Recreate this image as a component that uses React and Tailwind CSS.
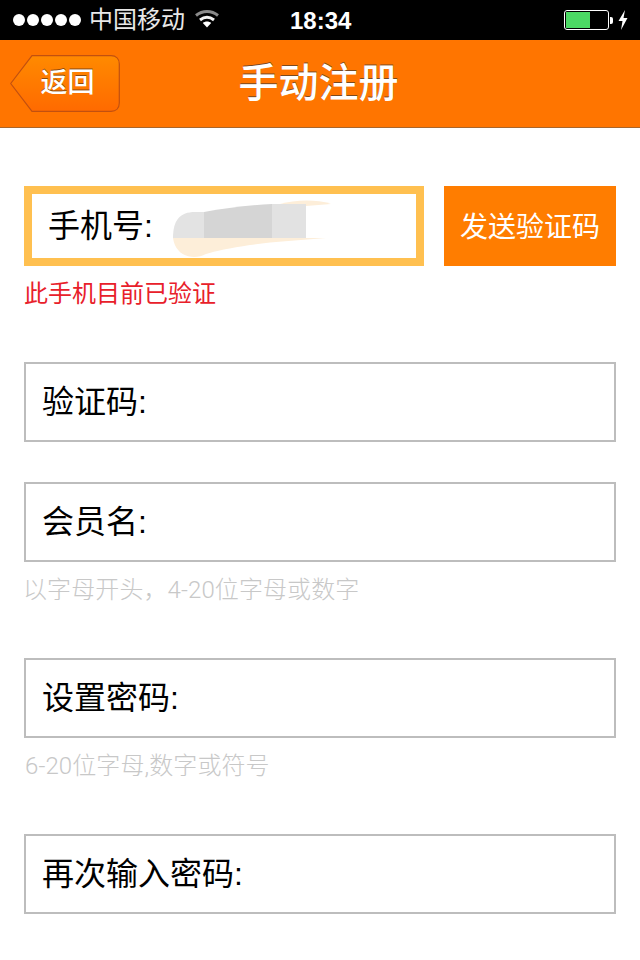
import React from 'react';

const cjk = { fontFamily: '"Liberation Sans", "Noto Sans CJK SC", sans-serif' };
const lightFont = { fontFamily: 'Roboto, "Noto Sans CJK SC", sans-serif' };

function Wifi() {
  return (
    <svg width="24" height="18" viewBox="0 0 24 18" className="ml-[10px] mt-[-2px]">
      <path d="M1 5.5C7.5 0.2 16.5 0.2 23 5.5" fill="none" stroke="#8a8a8a" strokeWidth="3" />
      <path d="M5 10C9.5 6.5 14.5 6.5 19 10" fill="none" stroke="#f2f2f2" strokeWidth="3" />
      <path d="M12 17.5L7.8 13C10 11 14 11 16.2 13Z" fill="#fff" />
    </svg>
  );
}

function StatusBar() {
  return (
    <div className="h-10 bg-black flex items-center text-[#e8e8e8] relative">
      <div className="flex items-center gap-[2px] ml-[13px]">
        {[0, 1, 2, 3, 4].map((i) => (
          <div key={i} className="w-[12px] h-[12px] rounded-full bg-white" />
        ))}
      </div>
      <span className="ml-[8px] text-[24px] leading-none">中国移动</span>
      <Wifi />
      <span className="absolute left-[290px] top-[7px] text-[24px] leading-[27px] font-bold text-white">18:34</span>
      <div className="ml-auto mr-[12px] flex items-center">
        <div className="w-[45px] h-[20px] border border-white rounded-[3px] p-[1px]">
          <div className="w-[24px] h-full bg-[#4cd964]" />
        </div>
        <div className="w-[3px] h-[7px] bg-white rounded-r-[2px] ml-[1px]" />
        <svg width="10" height="20" viewBox="0 0 10 20" className="ml-[5px]">
          <path d="M7 0L0.5 11H4.5L3 20L9.5 8H5.5Z" fill="#fff" />
        </svg>
      </div>
    </div>
  );
}

function BackButton() {
  return (
    <div className="relative w-[110px] h-[57px] flex items-center justify-center">
      <svg width="110" height="57" viewBox="0 0 110 57" className="absolute inset-0">
        <defs>
          <linearGradient id="back" x1="0" y1="0" x2="0" y2="1">
            <stop offset="0" stopColor="#ff8a00" />
            <stop offset="1" stopColor="#ff6a00" />
          </linearGradient>
        </defs>
        <path
          d="M0.7 28.5L22 0.7H101C106 0.7 109.3 4 109.3 9V48C109.3 53 106 56.3 101 56.3H22Z"
          fill="url(#back)"
          stroke="#c2500f"
          strokeWidth="1.2"
        />
      </svg>
      <span className="relative ml-[5px] text-[27px] leading-none font-medium text-white [text-shadow:0_-1px_0_#8a4a10]">返回</span>
    </div>
  );
}

function Header() {
  return (
    <div className="h-[88px] bg-[#ff7500] border-b border-[#a8662c] relative flex items-center pl-[10px]">
      <BackButton />
      <span className="absolute inset-x-0 pr-[3px] pb-[2px] text-center text-[40px] leading-none font-medium text-white [text-shadow:0_-1px_0_#7a4a20]">手动注册</span>
    </div>
  );
}

function Smudge() {
  return (
    <svg width="160" height="62" viewBox="173 198 160 62" className="absolute left-[141px] top-[4px]">
      <path d="M280 204C295 200 315 199 331 204L306 206H280Z" fill="#fdeed9" />
      <path d="M173 238H326C300 240 270 242 250 245C230 248 215 251 206 254C195 260 176 258 173 238Z" fill="#fdeed9" />
      <path d="M173 238C173 220 180 212 195 212H204V238Z" fill="#e3e3e3" />
      <path d="M204 212C225 208 250 205 272 204V238H204Z" fill="#d5d5d5" />
      <path d="M272 204H306V238H272Z" fill="#e2e2e2" />
    </svg>
  );
}

function PhoneRow() {
  return (
    <div className="flex gap-5">
      <div className="relative w-[400px] h-[80px] border-[8px] border-[#ffc050] bg-white flex items-center pl-[16px] text-[32px] text-black">
        手机号:
        <Smudge />
      </div>
      <div className="w-[172px] h-[80px] bg-[#ff7d00] flex items-center justify-center text-white text-[28px] pt-[3px]">发送验证码</div>
    </div>
  );
}

function Field({ label }) {
  return (
    <div className="h-[80px] border-2 border-[#bdbdbd] bg-white flex items-center pl-[17px] text-[32px] text-black">
      <span className="ml-[-1px]">{label}</span>
    </div>
  );
}

function Hint({ children, className = '' }) {
  return (
    <p className={`mt-[14px] text-[24px] leading-[28px] tracking-[0.1px] font-light text-[#c8c8c8] ${className}`} style={lightFont}>
      {children}
    </p>
  );
}

export default function App() {
  return (
    <div className="w-[640px] h-[960px] bg-white overflow-hidden" style={cjk}>
      <StatusBar />
      <Header />
      <div className="pt-[58px] pl-[24px] pr-[24px]">
        <PhoneRow />
        <p className="mt-[14px] text-[24px] leading-[28px] text-[#e8202a]">此手机目前已验证</p>
        <div className="mt-[54px]">
          <Field label="验证码:" />
        </div>
        <div className="mt-[40px]">
          <Field label="会员名:" />
        </div>
        <Hint className="ml-[-1px]">以字母开头，4-20位字母或数字</Hint>
        <div className="mt-[54px]">
          <Field label="设置密码:" />
        </div>
        <Hint className="ml-[1px]">6-20位字母,数字或符号</Hint>
        <div className="mt-[54px]">
          <Field label="再次输入密码:" />
        </div>
      </div>
    </div>
  );
}
